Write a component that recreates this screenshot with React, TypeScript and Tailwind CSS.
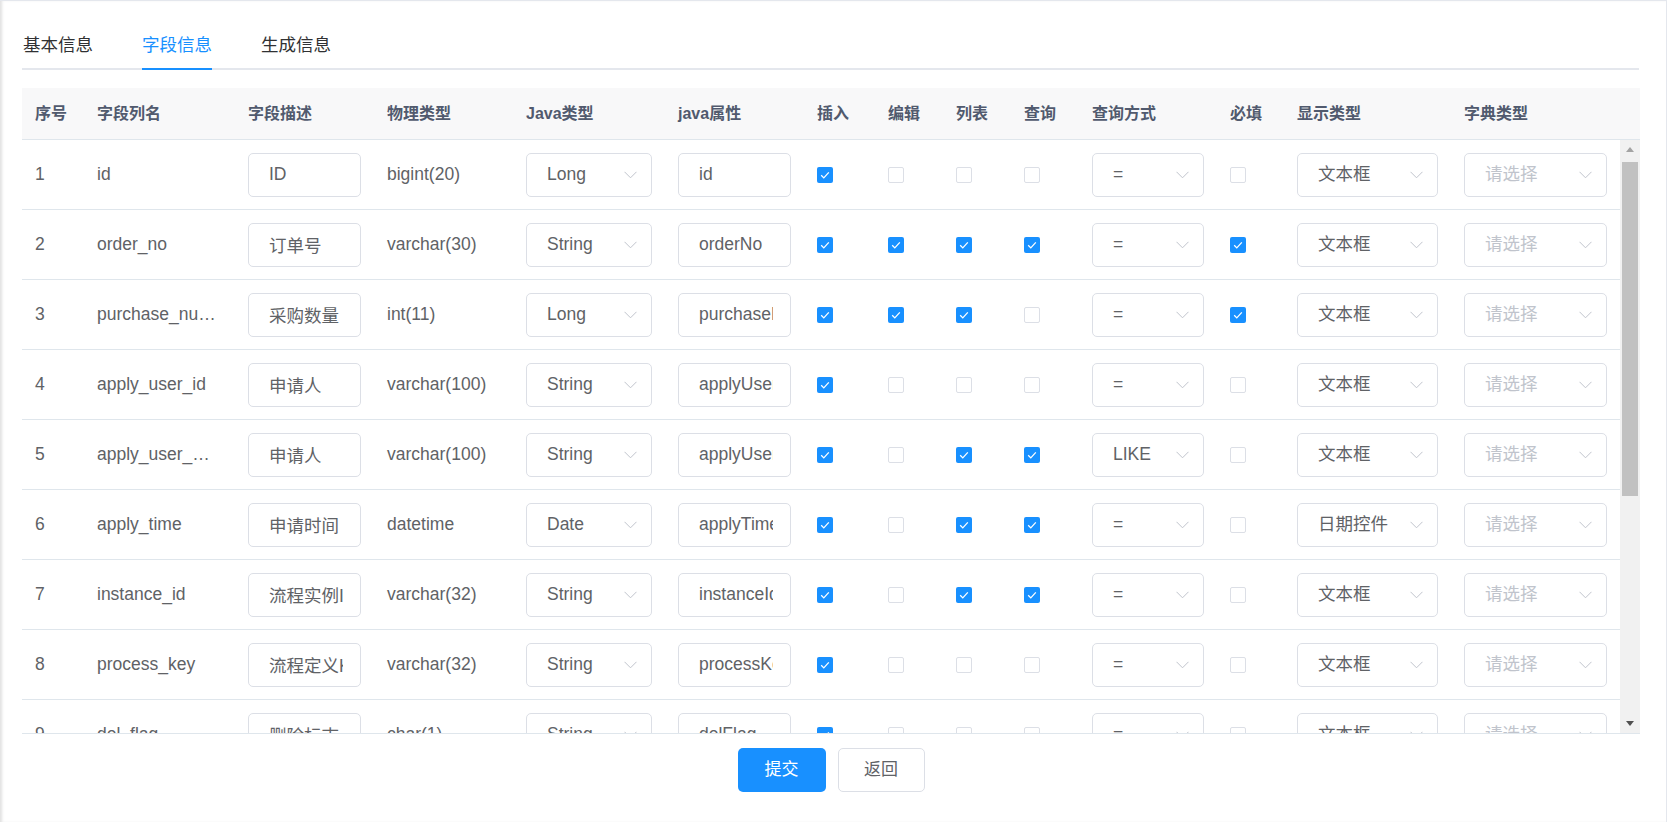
import React from "react";

const font = { fontFamily: '"Liberation Sans", "Noto Sans CJK SC", sans-serif' };

const cols =
  "grid grid-cols-[62px_151px_139px_139px_152px_139px_71px_68px_68px_68px_138px_67px_167px_169px]";

type Row = {
  no: number;
  name: string;
  desc: string;
  type: string;
  javaType: string;
  field: string;
  flags: [boolean, boolean, boolean, boolean];
  query: string;
  required: boolean;
  html: string;
};

// long column names are shown cut with an ellipsis, as the table tooltip cell does
const rows: Row[] = [
  { no: 1, name: "id", desc: "ID", type: "bigint(20)", javaType: "Long", field: "id", flags: [true, false, false, false], query: "=", required: false, html: "文本框" },
  { no: 2, name: "order_no", desc: "订单号", type: "varchar(30)", javaType: "String", field: "orderNo", flags: [true, true, true, true], query: "=", required: true, html: "文本框" },
  { no: 3, name: "purchase_nu…", desc: "采购数量", type: "int(11)", javaType: "Long", field: "purchaseNum", flags: [true, true, true, false], query: "=", required: true, html: "文本框" },
  { no: 4, name: "apply_user_id", desc: "申请人", type: "varchar(100)", javaType: "String", field: "applyUserId", flags: [true, false, false, false], query: "=", required: false, html: "文本框" },
  { no: 5, name: "apply_user_…", desc: "申请人", type: "varchar(100)", javaType: "String", field: "applyUserName", flags: [true, false, true, true], query: "LIKE", required: false, html: "文本框" },
  { no: 6, name: "apply_time", desc: "申请时间", type: "datetime", javaType: "Date", field: "applyTime", flags: [true, false, true, true], query: "=", required: false, html: "日期控件" },
  { no: 7, name: "instance_id", desc: "流程实例ID", type: "varchar(32)", javaType: "String", field: "instanceId", flags: [true, false, true, true], query: "=", required: false, html: "文本框" },
  { no: 8, name: "process_key", desc: "流程定义Key", type: "varchar(32)", javaType: "String", field: "processKey", flags: [true, false, false, false], query: "=", required: false, html: "文本框" },
  { no: 9, name: "del_flag", desc: "删除标志", type: "char(1)", javaType: "String", field: "delFlag", flags: [true, false, false, false], query: "=", required: false, html: "文本框" },
];

const headers = ["序号", "字段列名", "字段描述", "物理类型", "Java类型", "java属性", "插入", "编辑", "列表", "查询", "查询方式", "必填", "显示类型", "字典类型"];

function TextInput({ value }: { value: string }) {
  return (
    <input
      readOnly
      value={value}
      style={font}
      className="h-[44px] w-full rounded-[5px] border border-[#dcdfe6] bg-white pl-[20px] pr-[17px] text-[17.5px] text-[#606266] outline-none"
    />
  );
}

function Select({ value, placeholder }: { value?: string; placeholder?: string }) {
  return (
    <div className="flex h-[44px] w-full items-center justify-between rounded-[5px] border border-[#dcdfe6] bg-white pl-[20px] pr-[14px]">
      <span className={value ? "text-[#606266]" : "text-[#c0c4cc]"}>{value ?? placeholder}</span>
      <svg width="13" height="8" viewBox="0 0 13 8" fill="none">
        <polyline points="0.5,0.8 6.5,6.8 12.5,0.8" stroke="#c0c4cc" strokeWidth="1" />
      </svg>
    </div>
  );
}

function Checkbox({ checked }: { checked: boolean }) {
  return checked ? (
    <span className="flex h-[16px] w-[16px] items-center justify-center rounded-[2px] bg-[#1890ff]">
      <svg width="16" height="16" viewBox="0 0 16 16" fill="none">
        <polyline points="4.2,8.3 6.8,10.9 11.8,5.4" stroke="white" strokeWidth="1.3" />
      </svg>
    </span>
  ) : (
    <span className="block h-[16px] w-[16px] rounded-[2px] border border-[#dcdfe6] bg-white" />
  );
}

function TableRow({ row }: { row: Row }) {
  return (
    <div className={`${cols} h-[70px] shrink-0 items-center border-b border-[#dfe6ec] text-[17.5px] text-[#606266]`}>
      <div className="pl-[13px]">{row.no}</div>
      <div className="truncate pl-[13px] pr-[13px]">{row.name}</div>
      <div className="px-[13px]">
        <TextInput value={row.desc} />
      </div>
      <div className="pl-[13px]">{row.type}</div>
      <div className="px-[13px]">
        <Select value={row.javaType} />
      </div>
      <div className="px-[13px]">
        <TextInput value={row.field} />
      </div>
      {row.flags.map((f, i) => (
        <div key={i} className="pl-[13px]">
          <Checkbox checked={f} />
        </div>
      ))}
      <div className="px-[13px]">
        <Select value={row.query} />
      </div>
      <div className="pl-[13px]">
        <Checkbox checked={row.required} />
      </div>
      <div className="px-[13px]">
        <Select value={row.html} />
      </div>
      <div className="px-[13px]">
        <Select placeholder="请选择" />
      </div>
    </div>
  );
}

export default function App() {
  const tabs = ["基本信息", "字段信息", "生成信息"];

  return (
    <div
      style={font}
      className="h-[822px] w-full overflow-hidden border-t border-r border-[#e4e7ed] bg-white shadow-[inset_3px_0_3px_-1px_rgba(0,0,0,0.12)]"
    >
      <div className="pl-[22px] pr-[27px] pt-[21px]">
        {/* tabs */}
        <div className="flex gap-[49px] border-b-2 border-[#e4e7ed] pl-[1px]">
          {tabs.map((t, i) => (
            <div
              key={t}
              className={`-mb-[2px] flex h-[48px] items-center border-b-2 text-[17.5px] ${
                i === 1 ? "border-[#1890ff] text-[#1890ff]" : "border-transparent text-[#303133]"
              }`}
            >
              {t}
            </div>
          ))}
        </div>

        {/* table */}
        <div className="mt-[18px] w-[1618px]">
          <div className="flex h-[52px] border-b border-[#dfe6ec] bg-[#f8f8f9]">
            <div className={`${cols} w-[1598px] items-center text-[16px] font-bold text-[#515a6e]`}>
              {headers.map((h) => (
                <div key={h} className="pl-[13px]">
                  {h}
                </div>
              ))}
            </div>
            <div className="w-[20px]" />
          </div>

          <div className="flex h-[594px] border-b border-[#dfe6ec]">
            <div className="flex h-full w-[1598px] flex-col overflow-hidden">
              {rows.map((r) => (
                <TableRow key={r.no} row={r} />
              ))}
            </div>
            <div className="flex w-[20px] flex-col bg-[#f1f1f1]">
              <div className="flex h-[18px] items-center justify-center">
                <svg width="8" height="5" viewBox="0 0 8 5">
                  <polygon points="0,5 8,5 4,0" fill="#a3a3a3" />
                </svg>
              </div>
              <div className="mx-[2px] mt-[4px] h-[334px] bg-[#c1c1c1]" />
              <div className="flex-1" />
              <div className="flex h-[20px] items-center justify-center">
                <svg width="8" height="5" viewBox="0 0 8 5">
                  <polygon points="0,0 8,0 4,5" fill="#505050" />
                </svg>
              </div>
            </div>
          </div>

          {/* buttons */}
          <div className="mt-[14px] flex justify-center gap-[12px]">
            <button
              type="button"
              className="h-[44px] w-[88px] rounded-[5px] bg-[#1890ff] text-[17px] text-white"
            >
              提交
            </button>
            <button
              type="button"
              className="h-[44px] w-[87px] rounded-[5px] border border-[#dcdfe6] bg-white text-[17px] text-[#606266]"
            >
              返回
            </button>
          </div>
        </div>
      </div>
    </div>
  );
}
